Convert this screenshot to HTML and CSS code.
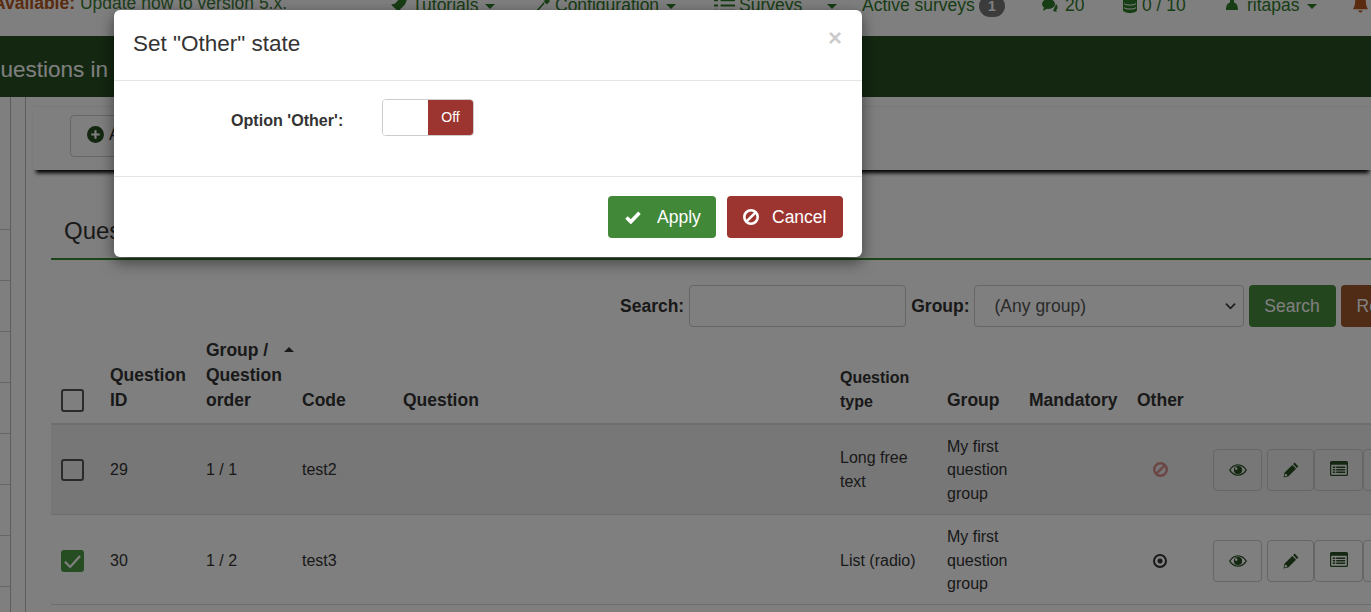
FILE: index.html
```html
<!DOCTYPE html>
<html lang="en">
<head>
<meta charset="utf-8">
<title>Questions</title>
<link rel="stylesheet" href="styles.css">
</head>
<body>
<div class="page">
  <svg class="sprites" width="0" height="0" aria-hidden="true">
    <symbol id="i-eye" viewBox="0 0 18 12"><path d="M9 .2C5.200.2 2 2.400 0 6c2 3.600 5.200 5.800 9 5.800s7-2.200 9-5.800C16 2.400 12.800.2 9 .2zM9 1.500c3 0 5.700 1.700 7.500 4.500-1.800 2.800-4.500 4.500-7.500 4.500S3.300 8.800 1.500 6C3.300 3.200 6 1.500 9 1.500z" fill-rule="evenodd"/><path d="M9 1.900a4.100 4.100 0 1 1 0 8.200 4.100 4.100 0 0 1 0-8.200zM7.200 3.300a1.300 1.300 0 1 0 0 2.600 1.300 1.300 0 0 0 0-2.600z" fill-rule="evenodd"/></symbol>
    <symbol id="i-pencil" viewBox="0 0 16 16"><path d="M11.600.6l3.800 3.800-1.500 1.500-3.800-3.800zM9.300 2.900l3.800 3.800-7.900 7.900-4.600.9.800-4.700zM2 11.700l-.5 2.800 2.800-.5-.6-1.700z" fill-rule="evenodd"/></symbol>
    <symbol id="i-table" viewBox="0 0 18 15"><path d="M1.500 0h15A1.500 1.500 0 0 1 18 1.500v12a1.500 1.500 0 0 1-1.500 1.500h-15A1.500 1.500 0 0 1 0 13.500v-12A1.500 1.500 0 0 1 1.500 0zM1.200 3.800v9.400c0 .4.200.6.600.6h14.400c.4 0 .6-.2.600-.6V3.800zM2.800 5.400h2.400v1.500H2.800zm3.400 0h9v1.500h-9zM2.800 8h2.400v1.500H2.800zm3.400 0h9v1.500h-9zm-3.400 2.600h2.400v1.500H2.800zm3.400 0h9v1.500h-9z" fill-rule="evenodd"/></symbol>
    <symbol id="i-ban" viewBox="0 0 16 16"><g fill="none" stroke="currentColor" stroke-width="2.600"><circle cx="8" cy="8" r="6.700"/><path d="M3.300 12.700l9.400-9.400"/></g></symbol>
    <symbol id="i-dot" viewBox="0 0 14 14"><path d="M7 0a7 7 0 1 1 0 14A7 7 0 0 1 7 0zm0 2a5 5 0 1 0 0 10A5 5 0 0 0 7 2zm0 2.500a2.500 2.500 0 1 1 0 5 2.500 2.500 0 0 1 0-5z" fill-rule="evenodd"/></symbol>
  </svg>

  <header class="topbar">
    <p class="notice"><strong>Available:</strong> Update now to version 5.x.</p>
    <nav class="topnav">
      <span class="nav-item nav-tutorials"><svg class="nav-ico ico-rocket" viewBox="0 0 16 16"><path d="M16 0c0 5-2 8-6 11l-1 4-3-3-2-2-3-3 4-1C8 2 11 0 16 0z"/></svg>Tutorials<i class="caret"></i></span>
      <span class="nav-item nav-config"><svg class="nav-ico ico-wrench" viewBox="0 0 16 16"><path d="M1 15l9-10 1 1-9 10zM14 1l2 3-3 3-3-3z"/></svg>Configuration<i class="caret"></i></span>
      <span class="nav-item nav-surveys"><svg class="nav-ico ico-list" viewBox="0 0 16 14" preserveAspectRatio="none"><path d="M0 1h3v2H0zm5 0h11v2H5zM0 6h3v2H0zm5 0h11v2H5zm-5 5h3v2H0zm5 0h11v2H5z"/></svg>Surveys<i class="caret caret-far"></i></span>
      <span class="nav-item nav-active">Active surveys<b class="badge">1</b></span>
      <span class="nav-item nav-comments"><svg class="nav-ico ico-comments" viewBox="0 0 16 14"><ellipse cx="6.500" cy="6" rx="6.500" ry="5"/><path d="M2 9l-1 4 5-3zM14 6c2 2 2 5 0 6l1 2-4-1z"/></svg>20</span>
      <span class="nav-item nav-quota"><svg class="nav-ico ico-db" viewBox="0 0 14 16"><path d="M0 3c0-4 14-4 14 0v10c0 4-14 4-14 0zm1 3c2 2 10 2 12 0v1c-2 2-10 2-12 0zm0 4c2 2 10 2 12 0v1c-2 2-10 2-12 0z" fill-rule="evenodd"/></svg>0 / 10</span>
      <span class="nav-item nav-user"><svg class="nav-ico ico-user" viewBox="0 0 12 10"><path d="M0 10C0 5 2 3 4 2.500V0h4v2.500C10 3 12 5 12 10z"/></svg>ritapas<i class="caret"></i></span>
      <span class="nav-item nav-bell"><svg class="bell" viewBox="0 0 14 16"><path d="M7 0c3 0 5 2 5 6 0 3 1 5 2 7H0c1-2 2-4 2-7 0-4 2-6 5-6zM5 14h4a2 2 0 0 1-4 0z"/></svg></span>
    </nav>
  </header>

  <div class="title-bar"><h1>Questions in survey</h1></div>

  <div class="workspace">
    <aside class="side-tree">
      <div class="tree-col"><span></span><span></span><span></span><span></span><span></span><span></span><span></span><span></span></div>
    </aside>
    <main class="content">
      <div class="toolbar">
        <button class="tool-btn" type="button"><svg class="tool-ico" viewBox="0 0 16 16"><path d="M8 0a8 8 0 1 1 0 16A8 8 0 0 1 8 0zM7 4v3H4v2h3v3h2V9h3V7H9V4z" fill-rule="evenodd"/></svg>Add new question</button>
      </div>
      <div class="panel">
        <h2 class="panel-title">Question list</h2>
        <form class="search-row">
          <label class="search-label" for="q">Search:</label>
          <input class="search-input" id="q" type="text">
          <label class="search-label" for="g">Group:</label>
          <div class="select-box" id="g"><span>(Any group)</span><svg class="chev" viewBox="0 0 12 8"><path d="M1 1.500l5 5 5-5" fill="none" stroke="#343a40" stroke-width="1.800"/></svg></div>
          <button class="btn-search" type="button">Search</button>
          <button class="btn-reset" type="button">Reset</button>
        </form>
        <table class="grid">
          <colgroup><col class="c1"><col class="c2"><col class="c3"><col class="c4"><col class="c5"><col class="c6"><col class="c7"><col class="c8"><col class="c9"><col class="c10"></colgroup>
          <thead>
            <tr>
              <th class="th-check"><span class="chk"></span></th>
              <th>Question ID</th>
              <th><span class="sort-wrap">Group / <i class="sort-caret"></i></span><br>Question order</th>
              <th>Code</th>
              <th>Question</th>
              <th class="th-type">Question type</th>
              <th>Group</th>
              <th>Mandatory</th>
              <th>Other</th>
              <th></th>
            </tr>
          </thead>
          <tbody>
            <tr class="striped">
              <td class="td-check"><span class="chk chk-row"></span></td>
              <td>29</td><td>1 / 1</td><td>test2</td><td></td>
              <td class="td-loose">Long free text</td>
              <td class="td-group">My first question group</td>
              <td></td>
              <td class="td-other"><svg class="st-ico st-ban"><use href="#i-ban"/></svg></td>
              <td class="td-act">
                <span class="act act-eye"><svg class="a-eye"><use href="#i-eye"/></svg></span><span class="act act-pen"><svg class="a-pen"><use href="#i-pencil"/></svg></span><span class="act act-tab"><svg class="a-tab"><use href="#i-table"/></svg></span><span class="act act-more"></span>
              </td>
            </tr>
            <tr class="plain">
              <td class="td-check"><span class="chk chk-row chk-on"><svg viewBox="0 0 16 16"><path d="M2.500 8.500l3.800 3.800 7.200-8" fill="none" stroke="#fff" stroke-width="1.600"/></svg></span></td>
              <td>30</td><td>1 / 2</td><td>test3</td><td></td>
              <td class="td-loose">List (radio)</td>
              <td class="td-group">My first question group</td>
              <td></td>
              <td class="td-other"><svg class="st-ico st-dot"><use href="#i-dot"/></svg></td>
              <td class="td-act">
                <span class="act act-eye"><svg class="a-eye"><use href="#i-eye"/></svg></span><span class="act act-pen"><svg class="a-pen"><use href="#i-pencil"/></svg></span><span class="act act-tab"><svg class="a-tab"><use href="#i-table"/></svg></span><span class="act act-more"></span>
              </td>
            </tr>
            <tr class="row-cut"><td colspan="10"></td></tr>
          </tbody>
        </table>
      </div>
    </main>
  </div>

  <div class="backdrop"></div>

  <section class="modal" role="dialog" aria-label="Set Other state">
    <header class="modal-head">
      <h3 class="modal-title">Set "Other" state</h3>
      <span class="modal-close">×</span>
    </header>
    <div class="modal-body">
      <span class="field-label">Option 'Other':</span>
      <span class="switch"><span class="switch-blank"></span><span class="switch-off">Off</span></span>
    </div>
    <footer class="modal-foot">
      <button class="m-btn m-apply" type="button"><svg class="m-ico-check" viewBox="0 0 16 13"><path d="M1.500 6.500l4.300 4.300 8.700-9" fill="none" stroke="#fff" stroke-width="3.600"/></svg>Apply</button>
      <button class="m-btn m-cancel" type="button"><svg class="m-ico-ban"><use href="#i-ban"/></svg>Cancel</button>
    </footer>
  </section>
</div>
</body>
</html>
```

FILE: styles.css
```css
* { box-sizing: border-box; }
html, body { margin: 0; padding: 0; }
body {
  font-family: "Liberation Sans", Arial, sans-serif;
  color: #333;
  font-size: 16px;
  background: #fff;
}
.page {
  position: relative;
  width: 1371px;
  height: 612px;
  overflow: hidden;
  background: #fff;
}
.sprites { position: absolute; }

/* Top bar, scrolled so its text is clipped */
.topbar {
  height: 36px;
  overflow: hidden;
  display: flex;
  color: #2f7a2a;
  font-size: 17.5px;
  line-height: 20px;
}
.notice {
  margin: -7px 0 0 -7px;
  width: 397px;
  flex: none;
  white-space: nowrap;
  color: #3c7a35;
}
.notice strong { color: #b4561e; }
.topnav { display: flex; flex: 1; margin-top: -5px; height: 20px; white-space: nowrap; }
.nav-item { display: flex; align-items: center; height: 20px; flex: none; }
.nav-ico { height: 14px; fill: #2f7a2a; flex: none; }
.ico-rocket { width: 17px; height: 17px; margin-right: 5px; }
.ico-wrench { width: 17px; height: 17px; margin-right: 5px; }
.ico-list { width: 21px; height: 15px; margin-right: 4px; }
.ico-comments { width: 16px; margin-right: 7px; }
.ico-db { width: 14px; height: 16px; margin-right: 5px; }
.ico-user { width: 12px; height: 10px; margin: 0 9px 0 0; }
.caret {
  display: inline-block;
  width: 0; height: 0;
  margin-left: 7px;
  margin-top: 2px;
  border-left: 5px solid transparent;
  border-right: 5px solid transparent;
  border-top: 5px solid #2f7a2a;
}
.caret-far { margin-left: 25px; }
.nav-tutorials { width: 143px; }
.nav-config { width: 181px; }
.nav-surveys { width: 148px; }
.nav-active { width: 180px; }
.nav-comments { width: 81px; }
.nav-quota { width: 103px; }
.nav-user { width: 100px; }
.nav-bell { margin-left: auto; margin-right: 3px; }
.badge {
  display: inline-block;
  margin-left: 4px;
  margin-top: 2px;
  width: 26px;
  height: 22px;
  line-height: 22px;
  text-align: center;
  border-radius: 11px;
  background: #777;
  color: #fff;
  font-size: 14px;
}
.bell { display: block; width: 15px; height: 18px; fill: #b4561e; margin-top: -2px; }

.title-bar {
  height: 61px;
  background: #274f22;
  overflow: hidden;
}
.title-bar h1 {
  margin: 0 0 0 -17px;
  font-weight: 400;
  font-size: 22.5px;
  line-height: 67px;
  color: #fff;
  white-space: nowrap;
}

.workspace { display: flex; height: 515px; }
.side-tree {
  width: 26px;
  flex: none;
  border-right: 1px solid #bbb;
  background: #fff;
}
.tree-col {
  width: 11px;
  height: 100%;
  border-right: 1px solid #bbb;
  padding-top: 82px;
}
.tree-col span {
  display: block;
  height: 51px;
  border-bottom: 1px solid #ccc;
}
.content { flex: 1; min-width: 0; padding-left: 7px; }
.toolbar {
  height: 64px;
  margin-top: 9px;
  margin-right: -1px;
  padding: 8px 0 0 37px;
  border-top: 1px solid #f2f2f2;
  box-shadow: 0 6px 4px -3px #000;
}
.tool-btn {
  display: flex;
  align-items: center;
  height: 42px;
  width: 220px;
  padding: 0 16px 4px;
  background: #fff;
  border: 1px solid #ccc;
  border-radius: 4px;
  font: 17.5px "Liberation Sans", Arial, sans-serif;
  color: #333;
}
.tool-ico { width: 17px; height: 17px; fill: #274f22; margin: 0 5px 0 0; flex: none; }
.panel { padding: 0 0 0 18px; }
.panel-title {
  margin: 41px 0 0;
  height: 49px;
  padding: 3px 0 0 13px;
  border-bottom: 2px solid #3c8a34;
  font-weight: 400;
  font-size: 24px;
  line-height: 33px;
  color: #333;
}
.search-row {
  display: flex;
  align-items: center;
  margin-top: 25px;
  height: 42px;
  width: 1400px;
  padding-left: 569px;
}
.search-label { font-weight: 700; font-size: 17.5px; margin-right: 5px; }
.search-input {
  width: 217px;
  height: 42px;
  margin-right: 5px;
  border: 1px solid #ccc;
  border-radius: 4px;
  background: #fff;
}
.select-box {
  display: flex;
  align-items: center;
  justify-content: space-between;
  width: 270px;
  height: 42px;
  margin-left: -1px;
  padding: 0 7px 0 20px;
  border: 1px solid #ccc;
  border-radius: 4px;
  color: #555;
  font-size: 17.5px;
}
.chev { width: 11px; height: 8px; }
.btn-search, .btn-reset {
  height: 42px;
  border: 0;
  border-radius: 4px;
  color: #fff;
  font: 17.5px "Liberation Sans", Arial, sans-serif;
  margin-left: 5px;
  flex: none;
}
.btn-search { width: 87px; background: #468c3c; }
.btn-reset { width: 70px; background: #a0572a; text-align: left; padding-left: 16px; }

.grid {
  table-layout: fixed;
  border-collapse: collapse;
  width: 1360px;
  margin-top: 8px;
  font-size: 16px;
  color: #333;
}
.c1 { width: 49px; } .c2 { width: 96px; } .c3 { width: 96px; } .c4 { width: 101px; }
.c5 { width: 437px; } .c6 { width: 107px; } .c7 { width: 82px; } .c8 { width: 108px; }
.c9 { width: 76px; } .c10 { width: 208px; }
.grid th {
  text-align: left;
  vertical-align: bottom;
  padding: 0 0 10px 10px;
  line-height: 25px;
  font-size: 17.5px;
  border-bottom: 2px solid #ddd;
  height: 89px;
}
.grid th.th-type { font-size: 16px; line-height: 24px; padding: 0 10px 9px; }
.grid .th-check { padding: 0 0 11px 10px; }
.sort-wrap { display: inline-block; white-space: nowrap; }
.sort-caret {
  display: inline-block;
  width: 0; height: 0;
  margin-left: 11px;
  vertical-align: 4px;
  border-left: 5px solid transparent;
  border-right: 5px solid transparent;
  border-bottom: 5px solid #333;
}
.grid td {
  padding: 0 10px;
  border-bottom: 1px solid #ddd;
  vertical-align: middle;
  line-height: 23.5px;
}
.striped td { background: #eee; height: 90px; padding-top: 1px; }
.plain td { height: 90px; padding-top: 3px; }
.row-cut td { height: 20px; border: 0; }
.grid .td-check { padding-left: 10px; padding-right: 0; }
.td-loose { line-height: 24px; }
.grid .td-other { padding-left: 26px; }
.grid .td-act { padding-left: 10px; padding-right: 0; white-space: nowrap; }
.chk {
  display: block;
  width: 23px;
  height: 23px;
  border: 2px solid #555;
  border-radius: 3px;
  background: transparent;
}
.chk-row { height: 22px; }
.chk-on { background: #4d9a43; border: 0; }
.chk-on svg { display: block; width: 23px; height: 22px; }
.st-ico { display: block; width: 15px; height: 15px; }
.st-ban { color: #d98a8a; }
.st-dot { fill: #333; width: 14px; height: 14px; }
.act {
  display: inline-flex;
  align-items: center;
  justify-content: center;
  height: 42px;
  background: transparent;
  border: 1px solid #ccc;
  border-radius: 4px;
  vertical-align: middle;
}
.act-eye { width: 49px; margin-right: 5px; }
.act-pen { width: 47px; }
.act-tab { width: 49px; }
.act-more { width: 49px; }
.act svg { fill: #274f22; }
.a-eye { width: 18px; height: 12px; }
.a-pen { width: 16px; height: 16px; }
.a-tab { width: 18px; height: 15px; margin-top: -2px; }

/* Backdrop and dialog */
.backdrop {
  position: absolute;
  inset: 0;
  background: rgba(0,0,0,.5);
}
.modal {
  position: absolute;
  left: 114px;
  top: 10px;
  width: 748px;
  height: 247px;
  background: #fff;
  border-radius: 6px;
  box-shadow: 0 5px 15px rgba(0,0,0,.5);
  color: #333;
}
.modal-head {
  display: flex;
  justify-content: space-between;
  height: 71px;
  padding: 0 20px 0 19px;
  border-bottom: 1px solid #e5e5e5;
}
.modal-title {
  margin: 0;
  font-weight: 400;
  font-size: 22.5px;
  line-height: 68px;
  color: #333;
}
.modal-close {
  font-weight: 700;
  font-size: 24px;
  line-height: 56px;
  color: #000;
  opacity: .2;
}
.modal-body {
  display: flex;
  align-items: flex-start;
  height: 96px;
  padding: 18px 0 0 117px;
  border-bottom: 1px solid #e5e5e5;
}
.field-label {
  width: 151px;
  font-weight: 700;
  font-size: 16.1px;
  line-height: 24px;
  padding-top: 9px;
  height: 37px;
}
.switch {
  display: flex;
  width: 92px;
  height: 37px;
  border: 1px solid #ccc;
  border-radius: 4px;
  overflow: hidden;
}
.switch-blank { width: 45px; background: #fff; }
.switch-off {
  flex: 1;
  background: #9c3530;
  color: #fff;
  font-size: 14px;
  line-height: 35px;
  text-align: center;
}
.modal-foot {
  display: flex;
  justify-content: flex-end;
  gap: 11px;
  padding: 19px 19px 0 0;
}
.m-btn {
  display: flex;
  align-items: center;
  height: 42px;
  border: 0;
  border-radius: 4px;
  color: #fff;
  font: 17.5px "Liberation Sans", Arial, sans-serif;
  padding: 0;
}
.m-apply { width: 108px; background: #418838; padding-left: 17px; }
.m-cancel { width: 116px; background: #9c3530; padding-left: 16px; }
.m-ico-check { width: 16px; height: 13px; margin-right: 16px; flex: none; }
.m-ico-ban { width: 16px; height: 16px; color: #fff; margin-right: 13px; flex: none; }
```
